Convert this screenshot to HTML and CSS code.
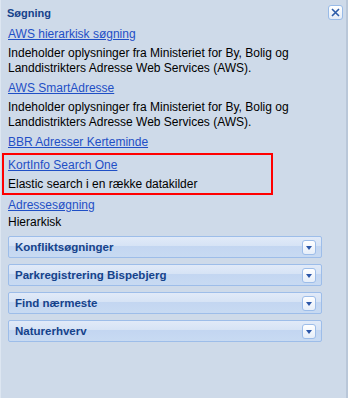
FILE: index.html
```html
<!DOCTYPE html>
<html>
<head>
<meta charset="utf-8">
<link rel="stylesheet" href="styles.css">
</head>
<body>
<div class="panel">
	<div class="panelHeader">
		<span class="panelTitle">Søgning</span>
		<span class="closeBtn">
			<svg width="9" height="9" viewBox="0 0 9 9"><path d="M1 1L8 8M8 1L1 8" stroke="#2b5aa8" stroke-width="1.6" fill="none"/></svg>
		</span>
	</div>
	<div class="panelBody">
		<div class="searchItem">
			<a href="#" class="searchLink">AWS hierarkisk søgning</a>
			<div class="searchDesc">Indeholder oplysninger fra Ministeriet for By, Bolig og Landdistrikters Adresse Web Services (AWS).</div>
		</div>
		<div class="searchItem">
			<a href="#" class="searchLink">AWS SmartAdresse</a>
			<div class="searchDesc">Indeholder oplysninger fra Ministeriet for By, Bolig og Landdistrikters Adresse Web Services (AWS).</div>
		</div>
		<div class="searchItem single">
			<a href="#" class="searchLink">BBR Adresser Kerteminde</a>
		</div>
		<div class="searchItem marked">
			<a href="#" class="searchLink">KortInfo Search One</a>
			<div class="searchDesc">Elastic search i en række datakilder</div>
		</div>
		<div class="searchItem tight">
			<a href="#" class="searchLink">Adressesøgning</a>
			<div class="searchSub">Hierarkisk</div>
		</div>

		<div class="groupList">
			<div class="groupBar"><span>Konfliktsøgninger</span><span class="dropBtn"></span></div>
			<div class="groupBar"><span>Parkregistrering Bispebjerg</span><span class="dropBtn"></span></div>
			<div class="groupBar"><span>Find nærmeste</span><span class="dropBtn"></span></div>
			<div class="groupBar"><span>Naturerhverv</span><span class="dropBtn"></span></div>
		</div>
	</div>
</div>
</body>
</html>
```

FILE: styles.css
```css
html, body {
	margin: 0;
	padding: 0;
	height: 100%;
}
body {
	background-color: #ffffff;
	font-family: 'Liberation Sans', Arial, sans-serif;
	font-size: 12px;
}
.panel {
	box-sizing: border-box;
	height: 398px;
	width: 348px;
	background-color: #cedae9;
	border-left: 1px solid #dde6f1;
	border-right: 2px solid #b9c7d9;
}
.panelHeader {
	display: flex;
	justify-content: space-between;
	align-items: flex-start;
	height: 26px;
	padding: 0 3px 0 6px;
}
.panelTitle {
	font-size: 11px;
	font-weight: bold;
	color: #15428b;
	margin-top: 7px;
}
.closeBtn {
	box-sizing: border-box;
	width: 15px;
	height: 15px;
	margin-top: 5px;
	border: 1px solid #99bbe8;
	border-radius: 3px;
	background: linear-gradient(#ffffff, #e4ecf7);
	display: flex;
	align-items: center;
	justify-content: center;
}
.panelBody {
	padding: 1px 0 0 0;
}
.searchItem {
	margin: 0 0 5px 0;
	padding-left: 7px;
	line-height: 15px;
}
.searchLink {
	display: block;
	color: #1f4fc6;
	text-decoration: underline;
	margin-bottom: 4px;
	width: max-content;
}
.searchDesc {
	color: #000000;
	width: 300px;
}
.searchItem.single {
	margin-bottom: 0;
}
.searchItem.single .searchLink {
	margin-bottom: 3px;
}
.searchItem.marked {
	margin: 0 0 3px 1px;
	width: 263px;
	padding: 3px 0 1px 4px;
	border: 2px solid #ff0000;
}
.searchItem.tight .searchLink {
	margin-bottom: 2px;
}
.searchSub {
	color: #000000;
}
.groupList {
	display: flex;
	flex-direction: column;
	gap: 6px;
	margin: 6px 0 0 7px;
	width: 314px;
}
.groupBar {
	box-sizing: border-box;
	height: 22px;
	display: flex;
	align-items: center;
	justify-content: space-between;
	padding: 0 5px 0 6px;
	border: 1px solid #9dbde9;
	border-radius: 2px;
	background: linear-gradient(#e1eaf8 0%, #d6e3f5 45%, #c3d6f1 46%, #c8daf2 100%);
	font-weight: bold;
	font-size: 11.5px;
	color: #15428b;
}
.dropBtn {
	box-sizing: border-box;
	position: relative;
	width: 14px;
	height: 15px;
	border: 1px solid #9dbde9;
	border-radius: 3px;
	background: linear-gradient(#ffffff, #e6eef9);
}
.dropBtn::after {
	content: "";
	position: absolute;
	left: 3px;
	top: 5px;
	border-left: 3px solid transparent;
	border-right: 3px solid transparent;
	border-top: 4px solid #2b56a8;
}
```
